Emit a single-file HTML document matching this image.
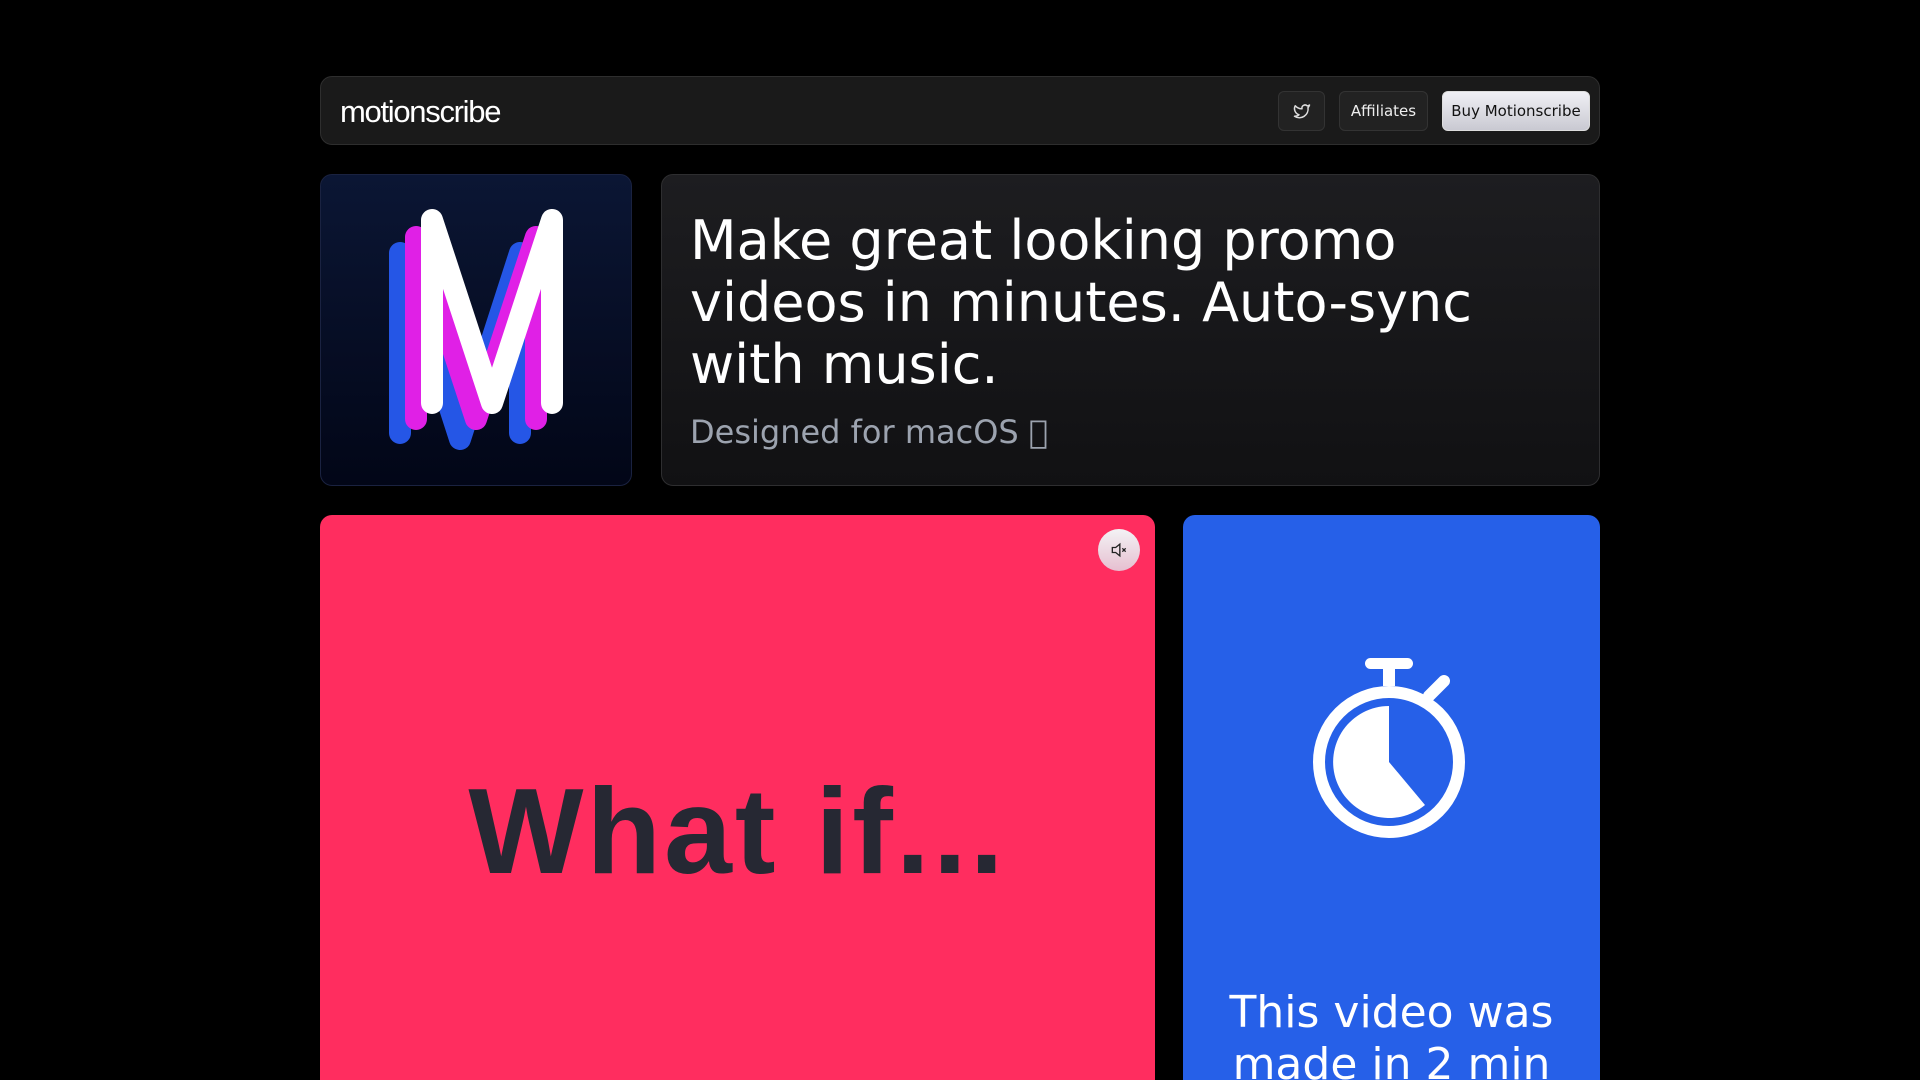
<!DOCTYPE html>
<html><head><meta charset="utf-8"><style>
*{margin:0;padding:0;box-sizing:border-box}
html,body{width:1920px;height:1080px;background:#000;overflow:hidden;font-family:"DejaVu Sans","Liberation Sans",sans-serif;color:#fff}
#wrap{position:relative;width:1920px;height:1080px;overflow:hidden}
.hdr{position:absolute;left:320px;top:76px;width:1280px;height:69px;background:#1a1a1a;border:1px solid #2e2e2e;border-radius:12px}
.logo{position:absolute;left:19px;top:17px;font-family:"Liberation Sans",sans-serif;font-size:31px;letter-spacing:-1.3px;color:#fff}
.btn{position:absolute;top:14px;height:40px;border-radius:6px;background:#222;border:1px solid #333;font-size:15px;display:flex;align-items:center;justify-content:center;color:#eee}
.card{position:absolute;border-radius:12px;overflow:hidden}
</style></head><body><div id="wrap">
<div class="hdr">
 <div class="logo">motionscribe</div>
 <div class="btn" style="left:957px;width:47px"><svg width="18" height="18" viewBox="0 0 24 24" fill="none" stroke="#ddd" stroke-width="2" stroke-linejoin="round"><path d="M22 4s-.7 2.1-2 3.4c1.6 10-9.4 17.3-18 11.6 2.2.1 4.4-.6 6-2C3 15.5.5 9.6 3 5c2.2 2.6 5.6 4.1 9 4-.9-4.2 4-6.6 7-3.8 1.1 0 3-1.2 3-1.2z"/></svg></div>
 <div class="btn" style="left:1018px;width:89px">Affiliates</div>
 <div class="btn" style="left:1121px;width:148px;background:linear-gradient(#f0f0f5,#c9c9d2);color:#111;border-color:#ddd">Buy Motionscribe</div>
</div>
<div class="card" style="left:320px;top:174px;width:312px;height:312px;background:linear-gradient(#0b1634,#020617);border:1px solid #1a2240">
 <svg width="312" height="312" viewBox="0 0 312 312">
  <g fill="none" stroke-width="22" stroke-linejoin="round" stroke-linecap="round">
   <polyline points="79,258 79,78 139,264 199,78 199,258" stroke="#2556e6"/>
   <polyline points="95,244 95,62 155,244 215,62 215,244" stroke="#e020e6"/>
   <polyline points="111,228 111,45 171,228 231,45 231,228" stroke="#fff"/>
  </g>
 </svg>
</div>
<div class="card" style="left:661px;top:174px;width:939px;height:312px;background:linear-gradient(#1d1d20,#111113);border:1px solid #2e2e30">
 <div style="position:absolute;left:28px;top:35px;font-size:54px;line-height:62px;width:880px">Make great looking promo videos in minutes. Auto-sync with music.</div>
 <div style="position:absolute;left:28px;top:238px;font-size:32px;color:#9ca3af">Designed for macOS &#xF8FF;</div>
</div>
<div class="card" style="left:320px;top:515px;width:835px;height:600px;background:#ff2d5f">
 <div style="position:absolute;left:0;width:835px;top:246px;text-align:center;font-family:'Liberation Sans',sans-serif;font-weight:bold;font-size:122px;color:#262833;letter-spacing:3px">What if...</div>
 <div style="position:absolute;left:778px;top:14px;width:42px;height:42px;border-radius:50%;background:linear-gradient(#f3f3f5,#e6bfd0);display:flex;align-items:center;justify-content:center">
  <svg width="20" height="20" viewBox="0 0 24 24" fill="none" stroke="#222" stroke-width="1.6"><path d="M4 9h4l5-4v14l-5-4H4z"/><path d="M16 10l4 4M20 10l-4 4"/></svg>
 </div>
</div>
<div class="card" style="left:1183px;top:515px;width:417px;height:600px;background:#2660e8">
 <svg style="position:absolute;left:130px;top:143px" width="160" height="180" viewBox="0 0 160 180">
  <rect x="52" y="0" width="48" height="11" rx="5.5" fill="#fff"/>
  <rect x="70" y="8" width="12" height="20" fill="#fff"/>
  <line x1="116" y1="38" x2="131" y2="23" stroke="#fff" stroke-width="12" stroke-linecap="round"/>
  <circle cx="76" cy="104" r="70" fill="none" stroke="#fff" stroke-width="12"/>
  <path d="M76 104 V48 A56 56 0 1 0 112 147 Z" fill="#fff"/>
 </svg>
 <div style="position:absolute;left:0;width:417px;top:472px;text-align:center;font-size:44px;line-height:52px">This video was made in 2 min</div>
</div>
</div></body></html>
